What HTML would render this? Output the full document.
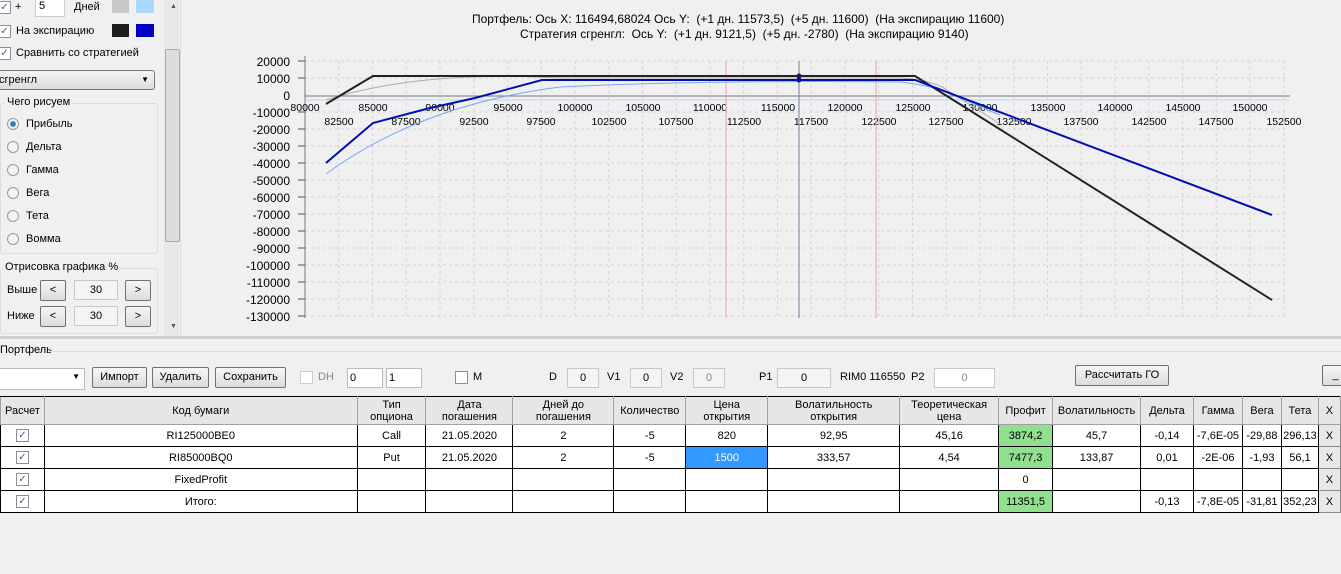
<!DOCTYPE html>
<html><head><meta charset="utf-8"><style>
body{margin:0;width:1341px;height:574px;background:#f0f0f0;font-family:"Liberation Sans",sans-serif;font-size:11px;color:#000;position:relative;overflow:hidden}
.a{position:absolute;white-space:nowrap}
.cb{position:absolute;width:11px;height:11px;border:1px solid #8f8f8f;background:#fff;font-size:10px;line-height:11px;text-align:center;color:#3a5a9a}
.rd{position:absolute;width:10px;height:10px;border:1px solid #999;border-radius:50%;background:#f4f4f4}
.btn{position:absolute;border:1px solid #707070;border-radius:2px;background:linear-gradient(#f6f6f6,#dcdcdc);text-align:center;line-height:19px;height:19px}
.box{position:absolute;border:1px solid #c8c8c8;background:#f4f4f4;text-align:center;line-height:18px;height:18px}
table{position:absolute;left:0;top:396px;border-collapse:collapse;background:#fff}
td{border:1px solid #000;text-align:center;height:21px;padding:0;font-size:11px}
tr.h td{background:#e6e6e6;height:27px;border-color:#a0a0a0;border-top:1px solid #000;line-height:12px}
.g{background:#90e090}
.x{background:#e8e8e8;border:1px solid #888}
</style></head><body>
<div class="cb" style="left:-2px;top:1px">✓</div><div class="a" style="left:15px;top:1px">+</div>
<div class="a" style="left:35px;top:-1px;width:25px;height:16px;background:#fff;border:1px solid #ccc;padding-left:3px">5</div>
<div class="a" style="left:74px;top:1px">Дней</div>
<div class="a" style="left:112px;top:-1px;width:17px;height:14px;background:#c8c8c8"></div>
<div class="a" style="left:136px;top:-1px;width:18px;height:14px;background:#aad8ff"></div>
<div class="cb" style="left:-2px;top:25px">✓</div><div class="a" style="left:16px;top:25px">На экспирацию</div>
<div class="a" style="left:112px;top:24px;width:17px;height:13px;background:#1e1e1e"></div>
<div class="a" style="left:136px;top:24px;width:18px;height:13px;background:#0000c8"></div>
<div class="cb" style="left:-2px;top:47px">✓</div><div class="a" style="left:16px;top:47px">Сравнить со стратегией</div>
<div class="a" style="left:-2px;top:70px;width:155px;height:18px;border:1px solid #777;border-radius:3px;background:linear-gradient(#f4f4f4,#ddd);line-height:18px">сгренгл<span style="position:absolute;right:5px;font-size:8px">▼</span></div>
<div class="a" style="left:0;top:103px;width:156px;height:149px;border:1px solid #ddd;border-radius:3px"></div>
<div class="a" style="left:5px;top:96px;background:#f0f0f0;padding:0 2px">Чего рисуем</div>
<div class="rd" style="left:7px;top:118px;background:radial-gradient(#2a7bc8 35%,#f4f4f4 45%)"></div><div class="a" style="left:26px;top:118px">Прибыль</div>
<div class="rd" style="left:7px;top:141px"></div><div class="a" style="left:26px;top:141px">Дельта</div>
<div class="rd" style="left:7px;top:164px"></div><div class="a" style="left:26px;top:164px">Гамма</div>
<div class="rd" style="left:7px;top:187px"></div><div class="a" style="left:26px;top:187px">Вега</div>
<div class="rd" style="left:7px;top:210px"></div><div class="a" style="left:26px;top:210px">Тета</div>
<div class="rd" style="left:7px;top:233px"></div><div class="a" style="left:26px;top:233px">Вомма</div>
<div class="a" style="left:0;top:268px;width:156px;height:64px;border:1px solid #ddd;border-radius:3px"></div>
<div class="a" style="left:3px;top:261px;background:#f0f0f0;padding:0 2px">Отрисовка графика %</div>
<div class="a" style="left:7px;top:284px">Выше</div><div class="btn" style="left:40px;top:280px;width:24px">&lt;</div><div class="box" style="left:74px;top:280px;width:42px">30</div><div class="btn" style="left:125px;top:280px;width:24px">&gt;</div>
<div class="a" style="left:7px;top:310px">Ниже</div><div class="btn" style="left:40px;top:306px;width:24px">&lt;</div><div class="box" style="left:74px;top:306px;width:42px">30</div><div class="btn" style="left:125px;top:306px;width:24px">&gt;</div>
<div class="a" style="left:164px;top:0;width:15px;height:336px;background:#e8e8e8"></div>
<div class="a" style="left:165px;top:49px;width:13px;height:191px;background:#ddd;border:1px solid #aaa;border-radius:2px"></div>
<div class="a" style="left:170px;top:3px;font-size:7px;color:#555">▲</div>
<div class="a" style="left:170px;top:323px;font-size:7px;color:#555">▼</div>
<div class="a" style="left:180px;top:0;width:1px;height:336px;background:#ddd"></div>
<div class="a" style="left:472px;top:12px;font-size:12px">Портфель: Ось X: 116494,68024 Ось Y:&nbsp; (+1 дн. 11573,5)&nbsp; (+5 дн. 11600)&nbsp; (На экспирацию 11600)</div>
<div class="a" style="left:520px;top:27px;font-size:12px">Стратегия сгренгл:&nbsp; Ось Y:&nbsp; (+1 дн. 9121,5)&nbsp; (+5 дн. -2780)&nbsp; (На экспирацию 9140)</div>
<svg class="a" style="left:0;top:0" width="1341" height="340">
<g stroke="#d4d4d4" stroke-dasharray="3,3" stroke-width="1">
<line x1="305" y1="61" x2="1290" y2="61"/><line x1="305" y1="78" x2="1290" y2="78"/>
<line x1="305" y1="112" x2="1290" y2="112"/><line x1="305" y1="129" x2="1290" y2="129"/><line x1="305" y1="146" x2="1290" y2="146"/><line x1="305" y1="163" x2="1290" y2="163"/><line x1="305" y1="180" x2="1290" y2="180"/><line x1="305" y1="197" x2="1290" y2="197"/><line x1="305" y1="214" x2="1290" y2="214"/><line x1="305" y1="231" x2="1290" y2="231"/><line x1="305" y1="248" x2="1290" y2="248"/><line x1="305" y1="265" x2="1290" y2="265"/><line x1="305" y1="282" x2="1290" y2="282"/><line x1="305" y1="299" x2="1290" y2="299"/><line x1="305" y1="316" x2="1290" y2="316"/>
</g>
<g stroke="#d4d4d4" stroke-dasharray="3,3" id="vg"></g>
<line x1="305" y1="56" x2="305" y2="318" stroke="#777"/>
<line x1="305" y1="96" x2="1290" y2="96" stroke="#777"/>
<line x1="305" y1="100" x2="1290" y2="100" stroke="#b8d8f8"/>
<g stroke="#555"><line x1="298" y1="61" x2="305" y2="61"/><line x1="298" y1="78" x2="305" y2="78"/><line x1="298" y1="112" x2="305" y2="112"/><line x1="298" y1="129" x2="305" y2="129"/><line x1="298" y1="146" x2="305" y2="146"/><line x1="298" y1="163" x2="305" y2="163"/><line x1="298" y1="180" x2="305" y2="180"/><line x1="298" y1="197" x2="305" y2="197"/><line x1="298" y1="214" x2="305" y2="214"/><line x1="298" y1="231" x2="305" y2="231"/><line x1="298" y1="248" x2="305" y2="248"/><line x1="298" y1="265" x2="305" y2="265"/><line x1="298" y1="282" x2="305" y2="282"/><line x1="298" y1="299" x2="305" y2="299"/><line x1="298" y1="316" x2="305" y2="316"/></g>
<g font-family="Liberation Sans" font-size="12" text-anchor="end">
<text x="290" y="66">20000</text><text x="290" y="83">10000</text><text x="290" y="100">0</text><text x="290" y="117">-10000</text><text x="290" y="134">-20000</text><text x="290" y="151">-30000</text><text x="290" y="168">-40000</text><text x="290" y="185">-50000</text><text x="290" y="202">-60000</text><text x="290" y="219">-70000</text><text x="290" y="236">-80000</text><text x="290" y="253">-90000</text><text x="290" y="270">-100000</text><text x="290" y="287">-110000</text><text x="290" y="304">-120000</text><text x="290" y="321">-130000</text>
</g>
<g font-family="Liberation Sans" font-size="10.5" text-anchor="middle">
<text x="305" y="111">80000</text><text x="373" y="111">85000</text><text x="440" y="111">90000</text><text x="508" y="111">95000</text><text x="575" y="111">100000</text><text x="643" y="111">105000</text><text x="710" y="111">110000</text><text x="778" y="111">115000</text><text x="845" y="111">120000</text><text x="913" y="111">125000</text><text x="980" y="111">130000</text><text x="1048" y="111">135000</text><text x="1115" y="111">140000</text><text x="1183" y="111">145000</text><text x="1250" y="111">150000</text>
<text x="339" y="125">82500</text><text x="406" y="125">87500</text><text x="474" y="125">92500</text><text x="541" y="125">97500</text><text x="609" y="125">102500</text><text x="676" y="125">107500</text><text x="744" y="125">112500</text><text x="811" y="125">117500</text><text x="879" y="125">122500</text><text x="946" y="125">127500</text><text x="1014" y="125">132500</text><text x="1081" y="125">137500</text><text x="1149" y="125">142500</text><text x="1216" y="125">147500</text><text x="1284" y="125">152500</text>
</g>
<line x1="726" y1="61" x2="726" y2="318" stroke="#f4a0a0"/>
<line x1="876" y1="61" x2="876" y2="318" stroke="#f4a0a0"/>
<line x1="799" y1="61" x2="799" y2="318" stroke="#7080a0"/>
<path d="M326 100 Q420 70 560 78 L900 78 Q935 80 950 92 L1000 124" fill="none" stroke="#aaa" stroke-width="1"/>
<path d="M326 174 Q420 105 560 87 Q700 80 900 82 Q935 86 950 94 L1000 115" fill="none" stroke="#7aa8f0" stroke-width="1"/>
<path d="M326 104 L373 76 L915 76 L1272 300" fill="none" stroke="#222" stroke-width="2"/>
<path d="M326 163 L373 123 L430 108 L475 98 L542 80 L915 80 L1272 215" fill="none" stroke="#0010b0" stroke-width="2"/>
<circle cx="799" cy="76" r="2.5" fill="#222"/><circle cx="799" cy="80" r="2.5" fill="#0010b0"/>
<script>var g=document.getElementById('vg');for(var x=338.75;x<1290;x+=33.75){var l=document.createElementNS('http://www.w3.org/2000/svg','line');l.setAttribute('x1',x);l.setAttribute('x2',x);l.setAttribute('y1',61);l.setAttribute('y2',316);g.appendChild(l);}</script>
</svg>
<div class="a" style="left:0;top:336px;width:1341px;height:3px;background:#d0d0d0"></div>
<div class="a" style="left:0;top:344px">Портфель</div>
<div class="a" style="left:50px;top:351px;width:1291px;height:1px;background:#ddd"></div>
<div class="a" style="left:-2px;top:368px;width:85px;height:20px;background:#fff;border:1px solid #bbb"><span style="position:absolute;right:4px;top:3px;font-size:8px">▼</span></div>
<div class="btn" style="left:92px;top:367px;width:53px">Импорт</div>
<div class="btn" style="left:152px;top:367px;width:55px">Удалить</div>
<div class="btn" style="left:215px;top:367px;width:69px">Сохранить</div>
<div class="cb" style="left:300px;top:371px;border-color:#ccc"></div><div class="a" style="left:318px;top:371px;color:#888">DH</div>
<div class="a" style="left:347px;top:368px;width:32px;height:18px;background:#fff;border:1px solid #bbb;padding-left:2px;line-height:18px">0</div>
<div class="a" style="left:386px;top:368px;width:32px;height:18px;background:#fff;border:1px solid #bbb;padding-left:2px;line-height:18px">1</div>
<div class="cb" style="left:455px;top:371px"></div><div class="a" style="left:473px;top:371px">M</div>
<div class="a" style="left:549px;top:371px">D</div><div class="box" style="left:567px;top:368px;width:30px">0</div>
<div class="a" style="left:607px;top:371px">V1</div><div class="box" style="left:630px;top:368px;width:30px">0</div>
<div class="a" style="left:670px;top:371px">V2</div><div class="box" style="left:693px;top:368px;width:30px;color:#888">0</div>
<div class="a" style="left:759px;top:371px">P1</div><div class="box" style="left:777px;top:368px;width:52px">0</div>
<div class="a" style="left:840px;top:371px">RIM0 116550</div><div class="a" style="left:911px;top:371px">P2</div><div class="box" style="left:934px;top:368px;width:59px;background:#fff;color:#888">0</div>
<div class="btn" style="left:1075px;top:365px;width:92px">Рассчитать ГО</div>
<div class="btn" style="left:1322px;top:365px;width:25px">_</div>
<table>
<colgroup><col style="width:44px"><col style="width:313px"><col style="width:69px"><col style="width:87px"><col style="width:101px"><col style="width:72px"><col style="width:82px"><col style="width:132px"><col style="width:99px"><col style="width:54px"><col style="width:88px"><col style="width:53px"><col style="width:49px"><col style="width:39px"><col style="width:37px"><col style="width:22px"></colgroup>
<tr class="h"><td>Расчет</td><td>Код бумаги</td><td>Тип<br>опциона</td><td>Дата<br>погашения</td><td>Дней до<br>погашения</td><td>Количество</td><td>Цена<br>открытия</td><td>Волатильность<br>открытия</td><td>Теоретическая<br>цена</td><td>Профит</td><td>Волатильность</td><td>Дельта</td><td>Гамма</td><td>Вега</td><td>Тета</td><td>X</td></tr>
<tr><td><span class="cb" style="position:relative;display:inline-block">✓</span></td><td>RI125000BE0</td><td>Call</td><td>21.05.2020</td><td>2</td><td>-5</td><td>820</td><td>92,95</td><td>45,16</td><td class="g">3874,2</td><td>45,7</td><td>-0,14</td><td>-7,6E-05</td><td>-29,88</td><td>296,13</td><td class="x">X</td></tr>
<tr><td><span class="cb" style="position:relative;display:inline-block">✓</span></td><td>RI85000BQ0</td><td>Put</td><td>21.05.2020</td><td>2</td><td>-5</td><td style="background:#3399ff;color:#fff">1500</td><td>333,57</td><td>4,54</td><td class="g">7477,3</td><td>133,87</td><td>0,01</td><td>-2E-06</td><td>-1,93</td><td>56,1</td><td class="x">X</td></tr>
<tr><td><span class="cb" style="position:relative;display:inline-block">✓</span></td><td>FixedProfit</td><td></td><td></td><td></td><td></td><td></td><td></td><td></td><td>0</td><td></td><td></td><td></td><td></td><td></td><td class="x">X</td></tr>
<tr><td><span class="cb" style="position:relative;display:inline-block">✓</span></td><td>Итого:</td><td></td><td></td><td></td><td></td><td></td><td></td><td></td><td class="g">11351,5</td><td></td><td>-0,13</td><td>-7,8E-05</td><td>-31,81</td><td>352,23</td><td class="x">X</td></tr>
</table>
</body></html>
